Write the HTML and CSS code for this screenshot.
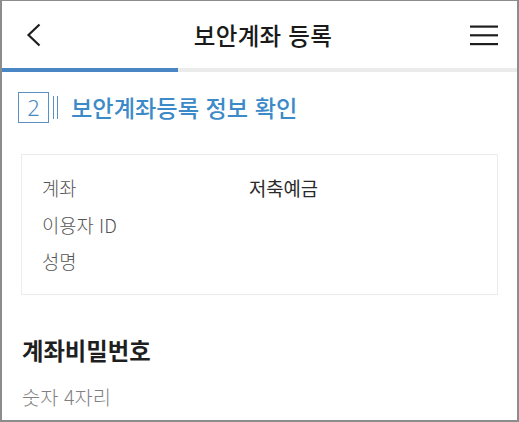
FILE: index.html
```html
<!DOCTYPE html>
<html lang="ko">
<head>
<meta charset="utf-8">
<title>보안계좌 등록</title>
<link rel="stylesheet" href="styles.css">
</head>
<body>
<div class="frame">
  <header class="topbar">
    <span class="back" aria-label="뒤로">
      <svg width="16" height="24" viewBox="0 0 16 24"><path d="M13.5 1.5 L2.5 12 L13.5 22.5" fill="none" stroke="#1e1e1e" stroke-width="2.2" stroke-linejoin="miter"/></svg>
    </span>
    <h1 class="title">보안계좌 등록</h1>
    <span class="menu" aria-label="메뉴">
      <svg width="28" height="21" viewBox="0 0 28 21"><rect x="0" y="0.5" width="28" height="2.2" fill="#1e1e1e"/><rect x="0" y="9.2" width="28" height="2.2" fill="#1e1e1e"/><rect x="0" y="18" width="28" height="2.2" fill="#1e1e1e"/></svg>
    </span>
  </header>
  <div class="progress"><div class="progress-fill"></div></div>
  <main class="content">
    <div class="step">
      <span class="step-num">2</span>
      <span class="step-bars"></span>
      <h2 class="step-title">보안계좌등록 정보 확인</h2>
    </div>
    <div class="card">
      <div class="row"><span class="label">계좌</span><span class="value">저축예금</span></div>
      <div class="row"><span class="label">이용자 ID</span><span class="value"></span></div>
      <div class="row"><span class="label">성명</span><span class="value"></span></div>
    </div>
    <h3 class="section-title">계좌비밀번호</h3>
    <p class="hint">숫자 4자리</p>
  </main>
</div>
</body>
</html>
```
FILE: styles.css
```css
* { box-sizing: border-box; }
html, body { margin: 0; padding: 0; background: #fff; }
body {
  font-family: "Noto Sans CJK KR", "Noto Sans", sans-serif;
  width: 519px;
  height: 422px;
  overflow: hidden;
}
.frame {
  width: 519px;
  height: 422px;
  border-top: 1px solid #8c8c8c;
  border-left: 2px solid #8c8c8c;
  border-right: 2px solid #8c8c8c;
  border-bottom: 2px solid #8c8c8c;
  overflow: hidden;
  background: #fff;
}
.topbar {
  height: 67px;
  display: grid;
  grid-template-columns: 1fr auto 1fr;
  align-items: center;
  padding: 0 19px 0 24px;
}
.back { display: flex; align-items: center; justify-self: start; margin-top: 1px; }
.menu { display: flex; align-items: center; justify-self: end; margin-top: 1px; }
.title {
  margin: 0;
  font-size: 23.5px;
  font-weight: 500;
  color: #1a1a1a;
  letter-spacing: 0.3px;
  line-height: 30px;
  margin-left: 2px;
}
.progress {
  height: 4px;
  background: #ebebeb;
}
.progress-fill {
  width: 176px;
  height: 4px;
  background: #4a86c4;
}
.content {
  padding: 0 19px;
}
.step {
  display: flex;
  align-items: center;
  margin-top: 20px;
  margin-left: -3px;
  height: 30px;
}
.step-num {
  width: 31px;
  height: 31px;
  border: 1.5px solid #5a90c2;
  color: #4a88c0;
  font-family: "Noto Sans", sans-serif;
  font-weight: 300;
  font-size: 22px;
  line-height: 28px;
  text-align: center;
}
.step-bars {
  width: 5px;
  height: 23px;
  margin-left: 4px;
  border-left: 1.5px solid #5a90c2;
  border-right: 1.5px solid #5a90c2;
}
.step-title {
  margin: 0 0 0 13px;
  font-size: 23.2px;
  font-weight: 500;
  color: #3d8ac8;
  line-height: 30px;
}
.card {
  margin-top: 32px;
  border: 1px solid #ececec;
  padding: 15px 20px 14px;
}
.row {
  display: flex;
  line-height: 36.5px;
  height: 36.5px;
  font-size: 18.8px;
  font-weight: 300;
}
.label {
  width: 207px;
  color: #555;
}
.value {
  color: #2a2a2a;
  font-weight: 400;
}
.section-title {
  margin: 40px 0 0 1px;
  font-size: 23.3px;
  font-weight: 700;
  color: #1f1f1f;
  line-height: 30px;
}
.hint {
  margin: 17px 0 0 1px;
  font-size: 19.8px;
  font-weight: 300;
  color: #808080;
  line-height: 30px;
}
```
